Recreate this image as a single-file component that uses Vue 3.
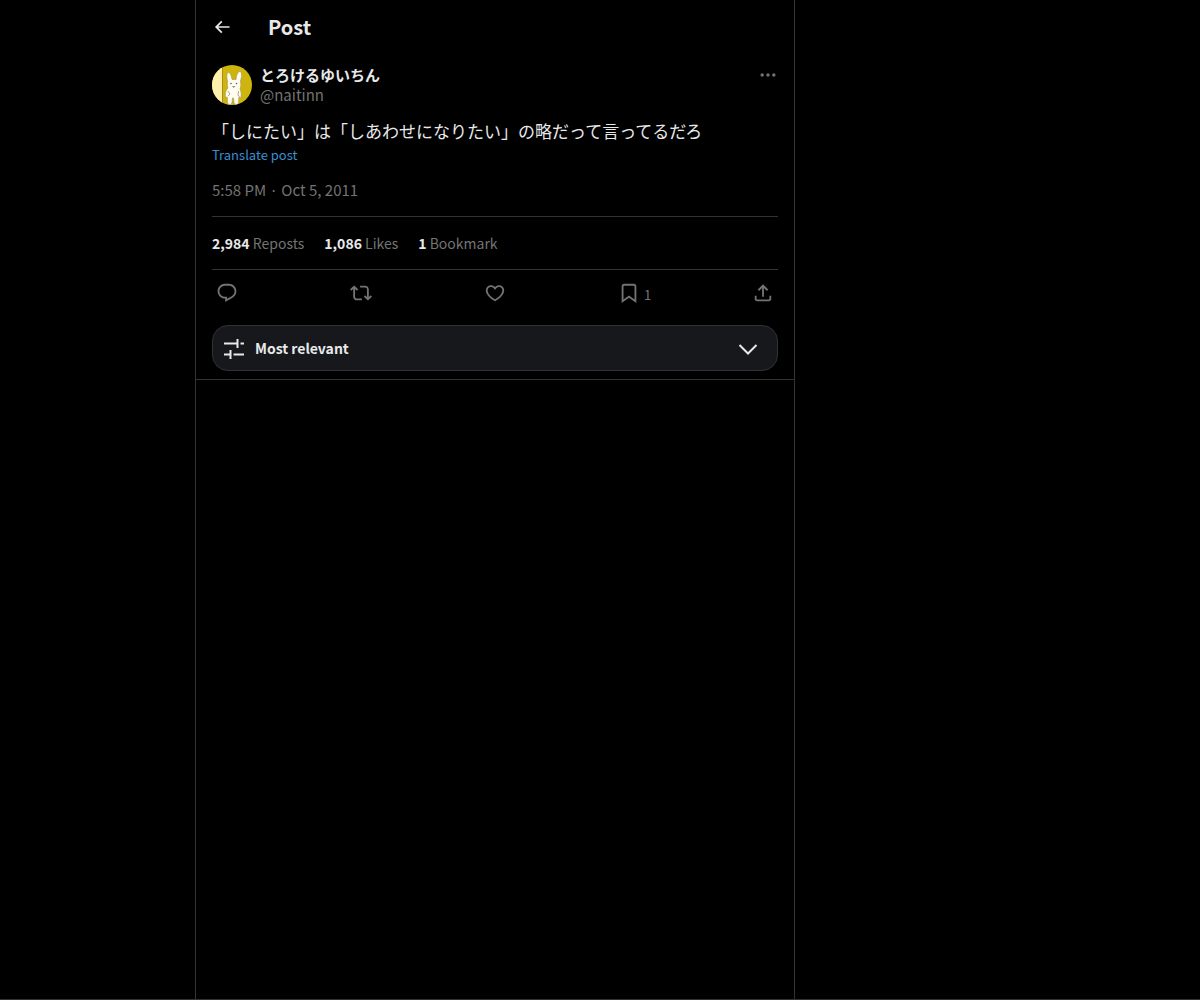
<script setup>
const stats = [
  { value: '2,984', label: 'Reposts' },
  { value: '1,086', label: 'Likes' },
  { value: '1', label: 'Bookmark' }
]

const actions = [
  {
    name: 'Reply',
    path: 'M1.751 10c0-4.42 3.584-8 8.005-8h4.366c4.49 0 8.129 3.64 8.129 8.13 0 2.96-1.607 5.68-4.196 7.11l-8.054 4.46v-3.69h-.067c-4.49.1-8.183-3.51-8.183-8.01zm8.005-6c-3.317 0-6.005 2.69-6.005 6 0 3.37 2.77 6.08 6.138 6.01l.351-.01h1.761v2.3l5.087-2.81c1.951-1.08 3.163-3.13 3.163-5.36 0-3.39-2.744-6.13-6.129-6.13H9.756z'
  },
  {
    name: 'Repost',
    path: 'M4.5 3.88l4.432 4.14-1.364 1.46L5.5 7.55V16c0 1.1.896 2 2 2H13v2H7.5c-2.209 0-4-1.79-4-4V7.55L1.432 9.48.068 8.02 4.5 3.88zM16.5 6H11V4h5.5c2.209 0 4 1.79 4 4v8.45l2.068-1.93 1.364 1.46-4.432 4.14-4.432-4.14 1.364-1.46 2.068 1.93V8c0-1.1-.896-2-2-2z'
  },
  {
    name: 'Like',
    path: 'M16.697 5.5c-1.222-.06-2.679.51-3.89 2.16l-.805 1.09-.806-1.09C9.984 6.01 8.526 5.44 7.304 5.5c-1.243.07-2.349.78-2.91 1.91-.552 1.12-.633 2.78.479 4.82 1.074 1.97 3.257 4.27 7.129 6.61 3.87-2.34 6.052-4.64 7.126-6.61 1.111-2.04 1.03-3.7.477-4.82-.561-1.13-1.666-1.84-2.908-1.91zm4.187 7.69c-1.351 2.48-4.001 5.12-8.379 7.67l-.503.3-.504-.3c-4.379-2.55-7.029-5.19-8.382-7.67-1.36-2.5-1.41-4.86-.514-6.67.887-1.79 2.647-2.91 4.601-3.01 1.651-.09 3.368.56 4.798 2.01 1.429-1.45 3.146-2.1 4.796-2.01 1.954.1 3.714 1.22 4.601 3.01.896 1.81.846 4.17-.514 6.67z'
  },
  {
    name: 'Bookmark',
    count: '1',
    path: 'M4 4.5C4 3.12 5.119 2 6.5 2h11C18.881 2 20 3.12 20 4.5v18.44l-8-5.71-8 5.71V4.5zM6.5 4c-.276 0-.5.22-.5.5v14.56l6-4.29 6 4.29V4.5c0-.28-.224-.5-.5-.5h-11z'
  },
  {
    name: 'Share',
    path: 'M12 2.59l5.7 5.7-1.41 1.42L13 6.41V16h-2V6.41l-3.3 3.3-1.41-1.42L12 2.59zM21 15l-.02 3.51c0 1.38-1.12 2.49-2.5 2.49H5.5C4.11 21 3 19.88 3 18.5V15h2v3.5c0 .28.22.5.5.5h12.98c.28 0 .5-.22.5-.5L19 15h2z'
  }
]
</script>

<template>
  <div class="page">
    <main class="column">
      <header class="topbar">
        <button class="icon-button" type="button" aria-label="Back">
          <svg class="icon-small" viewBox="0 0 24 24" aria-hidden="true">
            <path d="M7.414 13l5.043 5.04-1.414 1.42L3.586 12l7.457-7.46 1.414 1.42L7.414 11H21v2H7.414z" />
          </svg>
        </button>
        <h1 class="title">Post</h1>
      </header>

      <article class="post">
        <div class="author">
          <svg class="avatar" viewBox="0 0 40 40" role="img" aria-label="Avatar">
            <defs>
              <clipPath id="avatar-circle"><circle cx="20" cy="20" r="20" /></clipPath>
            </defs>
            <g clip-path="url(#avatar-circle)">
              <rect width="40" height="40" fill="#cdb50d" />
              <rect width="10" height="40" fill="#fff0ae" />
              <rect x="10" width="1" height="40" fill="#b28c12" />
              <path
                d="M15.5 16C14.5 12 14.5 8 16.5 7.5c2 0 3 4 3.500 7h4c.5-4 1.500-8 4-8 2.500.5 1.500 6 .5 9.500.5 3 .5 6-.5 8 1 2 1.500 5 1 8-.5 1-1.500 1-2 0l-.5 6c-.5 2-4 2-4.500 0l-.5-5h-1l-.5 5c-.5 2-4 2-4.500 0l-.3-6c-1.700 1-2.200-1-1.700-4 .3-2 1-4 2.500-5-.8-2-.8-4-.5-7z"
                fill="#fffdf2"
                stroke="#b39a55"
                stroke-width="0.7"
              />
              <circle cx="19" cy="18.500" r="0.8" fill="#655b43" />
              <circle cx="24.500" cy="18.500" r="0.8" fill="#655b43" />
              <path d="M20.500 21.500h2.500l-1 1zM16 26l2 3-2 2M26.500 26l-.5 4 1.500 2" fill="none" stroke="#8d8060" stroke-width="0.7" />
            </g>
          </svg>
          <div class="names">
            <span class="display-name">とろけるゆいちん</span>
            <span class="handle">@naitinn</span>
          </div>
          <button class="icon-button more" type="button" aria-label="More">
            <svg class="icon-small" viewBox="0 0 24 24" aria-hidden="true">
              <path d="M3 12c0-1.1.9-2 2-2s2 .9 2 2-.9 2-2 2-2-.9-2-2zm9 2c1.1 0 2-.9 2-2s-.9-2-2-2-2 .9-2 2 .9 2 2 2zm7 0c1.1 0 2-.9 2-2s-.9-2-2-2-2 .9-2 2 .9 2 2 2z" />
            </svg>
          </button>
        </div>

        <p class="body" lang="ja">「しにたい」は「しあわせになりたい」の略だって言ってるだろ</p>
        <button class="translate" type="button">Translate post</button>
        <time class="date" datetime="2011-10-05T17:58">5:58 PM · Oct 5, 2011</time>

        <div class="stats">
          <a v-for="stat in stats" :key="stat.label" class="stat" href="#">
            <strong>{{ stat.value }}</strong> {{ stat.label }}
          </a>
        </div>

        <div class="actions">
          <button v-for="action in actions" :key="action.name" class="action" type="button" :aria-label="action.name">
            <svg class="icon" viewBox="0 0 24 24" aria-hidden="true"><path :d="action.path" /></svg>
            <span v-if="action.count" class="count">{{ action.count }}</span>
          </button>
        </div>

        <button class="sort" type="button">
          <svg class="sort-icon" viewBox="0 0 24 24" aria-hidden="true">
            <path d="M2 7.500h14M18.500 7.500H22M15.500 3v9M2 18.500h7M11.500 18.500H22M8.500 14v9" />
          </svg>
          <span class="sort-label">Most relevant</span>
          <svg class="sort-icon" viewBox="0 0 24 24" aria-hidden="true">
            <path d="M3.500 9l8.500 8.500L20.500 9" />
          </svg>
        </button>
      </article>
    </main>
  </div>
</template>

<style>
body {
  margin: 0;
  background: #000;
}
</style>

<style scoped>
.page {
  box-sizing: border-box;
  display: grid;
  grid-template-columns: 13fr minmax(0, 600px) 27fr;
  min-height: 100vh;
  border-bottom: 1px solid #333;
  background: #000;
  color: #e7e9ea;
  font-family: "Noto Sans CJK JP", sans-serif;
  font-size: 15px;
  line-height: 20px;
}

.column {
  grid-column: 2;
  border: solid #333;
  border-width: 0 1px;
}

button {
  margin: 0;
  padding: 0;
  border: 0;
  background: none;
  color: inherit;
  font: inherit;
  cursor: pointer;
}

svg {
  display: block;
  flex: none;
  fill: currentColor;
}

.topbar {
  display: flex;
  align-items: center;
  gap: 36px;
  height: 53px;
  padding: 0 16px;
}

.icon-small {
  width: 20px;
  height: 20px;
}

.title {
  margin: 0;
  font-size: 20px;
  line-height: 24px;
  font-weight: 700;
}

.post {
  display: flex;
  flex-direction: column;
  padding: 12px 16px 8px;
  border-bottom: 1px solid #333;
}

.author {
  display: flex;
  align-items: flex-start;
  gap: 8px;
}

.avatar {
  width: 40px;
  height: 40px;
}

.names {
  display: flex;
  flex: 1;
  flex-direction: column;
}

.display-name {
  font-weight: 700;
}

.handle,
.date,
.stat,
.action,
.more {
  color: #737373;
}

.body {
  margin: 14px 0 0;
  font-size: 17px;
  line-height: 24px;
}

.translate {
  align-self: flex-start;
  color: #3a8fd0;
  font-size: 13px;
  line-height: 24px;
}

.date {
  margin-top: 13px;
  padding-bottom: 16px;
  border-bottom: 1px solid #333;
}

.stats {
  display: flex;
  gap: 20px;
  padding: 16px 0;
  border-bottom: 1px solid #333;
  font-size: 14px;
}

.stat {
  text-decoration: none;
}

.stat strong {
  color: #e7e9ea;
}

.actions {
  display: flex;
  justify-content: space-between;
  height: 46px;
}

.action {
  display: flex;
  align-items: center;
  gap: 4px;
  width: 30px;
  padding: 0 4px;
}

.icon {
  width: 22px;
  height: 22px;
}

.count {
  padding-top: 3px;
  font-size: 13px;
}

.sort {
  display: flex;
  align-items: center;
  gap: 9px;
  margin-top: 9px;
  padding: 10px 17px 10px 9px;
  border: 1px solid #2f3336;
  border-radius: 16px;
  background: #16181c;
  text-align: left;
}

.sort-label {
  flex: 1;
  font-size: 14px;
  line-height: 24px;
  font-weight: 700;
}

.sort-icon {
  width: 24px;
  height: 24px;
  fill: none;
  stroke: currentColor;
  stroke-width: 2;
}
</style>
